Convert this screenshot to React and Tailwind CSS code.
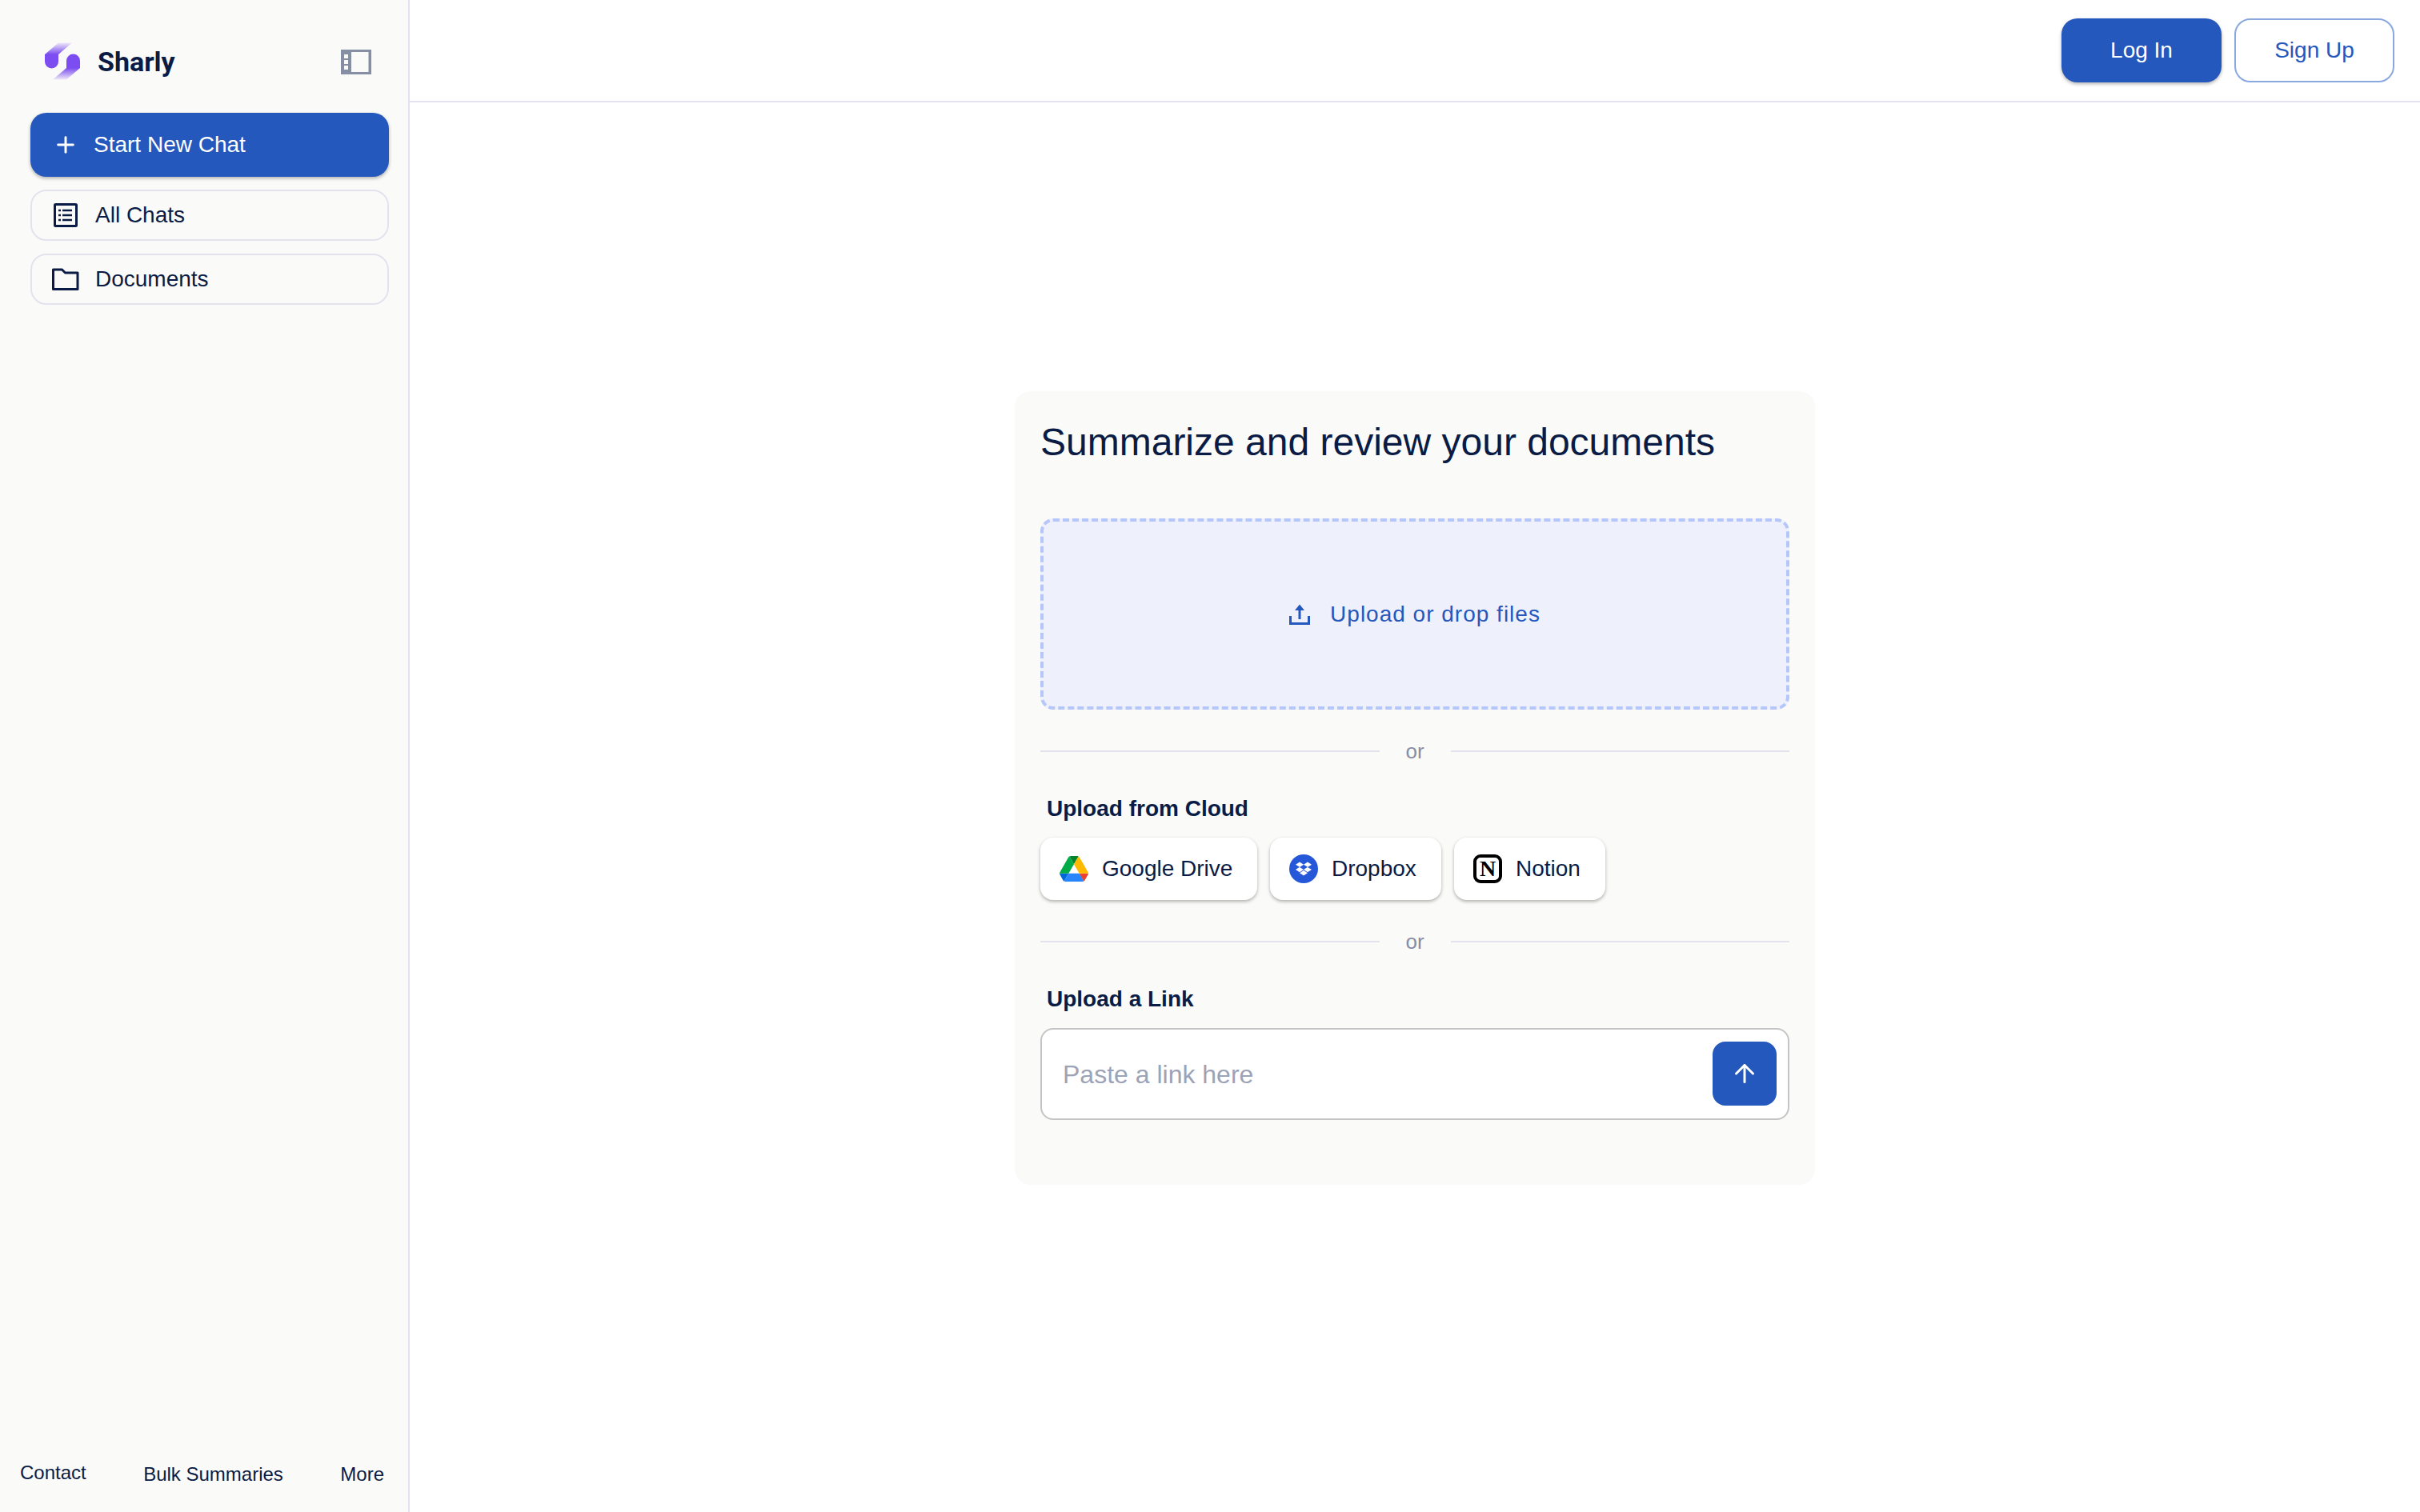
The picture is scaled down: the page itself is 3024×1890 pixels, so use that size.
import { ArrowUp, Plus } from "lucide-react";
import { FaDropbox } from "react-icons/fa";

function Logo() {
  return (
    <svg width="46" height="48" viewBox="0 0 46 48" className="shrink-0">
      <defs>
        <linearGradient id="top" x1="0" y1="1" x2="0" y2="0">
          <stop offset="0" stopColor="#7c4df0" />
          <stop offset="1" stopColor="#7c4df0" stopOpacity="0.1" />
        </linearGradient>
        <linearGradient id="bottom" x1="0" y1="0" x2="0" y2="1">
          <stop offset="0" stopColor="#7c4df0" />
          <stop offset="1" stopColor="#7c4df0" stopOpacity="0.1" />
        </linearGradient>
      </defs>
      <path d="M0 15h17l17-14.500h-17z" fill="url(#top)" />
      <path d="M0 15h17v9a8.500 8.500 0 0 1-17 0z" fill="#7c4df0" />
      <path d="M27 32h17v-9a8.500 8.500 0 0 0-17 0z" fill="#7c4df0" />
      <path d="M27 32h17l-17 14.500h-17z" fill="url(#bottom)" />
    </svg>
  );
}

function PanelIcon() {
  return (
    <svg width="38" height="31" viewBox="0 0 38 31" className="text-[#868ea3]">
      <path fill="currentColor" fillRule="evenodd" d="M0 0h38v31H0zM3 3v25h31.500V3H13v25H3z" />
      <rect x="4" y="6" width="5" height="5" fill="#fafaf8" />
      <rect x="4" y="13" width="5" height="5" fill="#fafaf8" />
      <rect x="4" y="20" width="5" height="5" fill="#fafaf8" />
    </svg>
  );
}

function ListIcon() {
  return (
    <svg width="30" height="30" viewBox="0 0 30 30" fill="none" stroke="#0a1c45">
      <rect x="1.500" y="1.500" width="27" height="27" rx="1" strokeWidth="3" />
      <path d="M11 9h12M11 15h12M11 21h12" strokeWidth="2.500" />
      <path d="M6 9h3M6 15h3M6 21h3" strokeWidth="2.500" />
    </svg>
  );
}

function FolderIcon() {
  return (
    <svg width="34" height="28" viewBox="0 0 34 28" fill="none" stroke="#0a1c45" strokeWidth="3" strokeLinejoin="round">
      <path d="M1.500 2h11l4 4h15.500v20.500h-30.500z" />
    </svg>
  );
}

function UploadIcon() {
  return (
    <svg width="26" height="26" viewBox="0 0 26 26" fill="none" stroke="#2558bd" strokeWidth="3">
      <path d="M13 19V3" />
      <path d="M13 0.500l6 7.500h-12z" fill="#2558bd" stroke="none" />
      <path d="M1.500 15v9.500h23v-9.500" />
    </svg>
  );
}

function DriveIcon() {
  return (
    <svg width="36" height="32" viewBox="0 0 87.300 78">
      <path d="m6.600 66.850 3.850 6.650c.8 1.400 1.950 2.500 3.300 3.300l13.750-23.800h-27.500c0 1.550.4 3.100 1.200 4.500z" fill="#0066da" />
      <path d="m43.650 25-13.750-23.800c-1.350.8-2.500 1.900-3.300 3.300l-25.400 44a9.060 9.060 0 0 0 -1.200 4.500h27.500z" fill="#00ac47" />
      <path d="m73.550 76.800c1.350-.8 2.500-1.900 3.300-3.300l1.600-2.750 7.650-13.250c.8-1.400 1.200-2.950 1.200-4.500h-27.502l5.852 11.500z" fill="#ea4335" />
      <path d="m43.650 25 13.750-23.800c-1.350-.8-2.900-1.200-4.500-1.200h-18.500c-1.600 0-3.150.45-4.500 1.200z" fill="#00832d" />
      <path d="m59.800 53h-32.300l-13.750 23.800c1.350.8 2.900 1.200 4.500 1.200h50.800c1.600 0 3.150-.45 4.500-1.200z" fill="#2684fc" />
      <path d="m73.400 26.500-12.700-22c-.8-1.400-1.950-2.500-3.300-3.300l-13.750 23.800 16.150 28h27.450c0-1.550-.4-3.100-1.200-4.500z" fill="#ffba00" />
    </svg>
  );
}

function Divider() {
  return (
    <div className="flex items-center h-[34px]">
      <div className="flex-1 h-[2px] bg-[#e3e2ee]" />
      <span className="w-[89px] text-center text-[26px] leading-[34px] text-[#868ea3]">or</span>
      <div className="flex-1 h-[2px] bg-[#e3e2ee]" />
    </div>
  );
}

function CloudButton({ icon, label, className }) {
  return (
    <button className={"flex items-center gap-[17px] h-[78px] pl-[24px] bg-white rounded-[16px] shadow-[0_2px_4px_rgba(0,0,0,0.3)] text-[28px] text-[#0a1c45] " + className}>
      {icon}
      {label}
    </button>
  );
}

export default function App() {
  return (
    <div className="flex h-[1890px] bg-white text-[#0a1c45] font-['Liberation_Sans',sans-serif]">
      {/* Sidebar */}
      <aside className="flex flex-col w-[512px] shrink-0 bg-[#fafaf8] border-r-2 border-[#e3e2ee]">
        <div className="flex items-center justify-between h-[141px] pl-[56px] pr-[46px] pt-[13px]">
          <div className="flex items-center gap-[20px]">
            <Logo />
            <span className="font-['Roboto',sans-serif] font-bold text-[34px]">Sharly</span>
          </div>
          <PanelIcon />
        </div>
        <div className="flex flex-col gap-[16px] pl-[38px] pr-[24px]">
          <button className="flex items-center h-[80px] pl-[32px] gap-[23px] rounded-[20px] bg-[#2558bd] text-white text-[28px] shadow-[0_2px_4px_rgba(0,0,0,0.3)]">
            <Plus size={32} strokeWidth={2.200} className="-mx-[4px]" />
            Start New Chat
          </button>
          <button className="flex items-center h-[64px] pl-[27px] gap-[22px] rounded-[20px] border-2 border-[#e3e2ee] text-[28px]">
            <ListIcon />
            All Chats
          </button>
          <button className="flex items-center h-[64px] pl-[25px] gap-[20px] rounded-[20px] border-2 border-[#e3e2ee] text-[28px]">
            <FolderIcon />
            Documents
          </button>
        </div>
        <div className="mt-auto flex justify-between items-center pl-[25px] pr-[30px] pb-[30px] text-[24px] leading-[32px]">
          <a className="mb-[3px]">Contact</a>
          <a>Bulk Summaries</a>
          <a>More</a>
        </div>
      </aside>

      <div className="flex flex-col flex-1">
        {/* Top bar */}
        <header className="flex items-center justify-end gap-[16px] h-[128px] pr-[32px] border-b-2 border-[#e3e2ee]">
          <button className="w-[200px] h-[80px] rounded-[20px] bg-[#2558bd] text-white text-[28px] shadow-[0_2px_4px_rgba(0,0,0,0.3)]">Log In</button>
          <button className="w-[200px] h-[80px] rounded-[20px] border-2 border-[#8aa8e0] text-[#2558bd] text-[28px]">Sign Up</button>
        </header>

        <main className="flex justify-center pt-[361px]">
          <section className="w-[1000px] h-[992px] px-[32px] pt-[32px] rounded-[20px] bg-[#fafaf8]">
            <h1 className="text-[48px] leading-[64px] font-normal mb-[63px]">Summarize and review your documents</h1>
            <div className="flex items-center justify-center gap-[25px] h-[239px] rounded-[16px] border-4 border-dashed border-[#b5c6fb] bg-[#eef0fc] text-[#2558bd] text-[28px] tracking-[1px]">
              <UploadIcon />
              Upload or drop files
            </div>
            <div className="mt-[35px]">
              <Divider />
            </div>
            <h2 className="mt-[39px] pl-[8px] text-[28px] leading-[32px] font-bold">Upload from Cloud</h2>
            <div className="flex gap-[16px] mt-[20px]">
              <CloudButton className="w-[271px]" icon={<DriveIcon />} label="Google Drive" />
              <CloudButton
                className="w-[214px]"
                icon={
                  <span className="flex items-center justify-center w-[36px] h-[36px] rounded-full bg-[#2558d8] text-white">
                    <FaDropbox size={20} />
                  </span>
                }
                label="Dropbox"
              />
              <CloudButton
                className="w-[189px]"
                icon={
                  <span className="flex items-center justify-center w-[36px] h-[36px] rounded-[9px] border-4 border-black bg-white text-black font-['Liberation_Serif',serif] font-bold text-[28px] leading-none">
                    N
                  </span>
                }
                label="Notion"
              />
            </div>
            <div className="mt-[35px]">
              <Divider />
            </div>
            <h2 className="mt-[39px] pl-[8px] text-[28px] leading-[32px] font-bold">Upload a Link</h2>
            <div className="flex items-center justify-between mt-[20px] h-[115px] pl-[26px] pr-[14px] rounded-[16px] border-2 border-[#c4c4c4] bg-white">
              <input
                type="text"
                placeholder="Paste a link here"
                className="flex-1 bg-transparent outline-none text-[32px] placeholder:text-[#9ca3b6]"
              />
              <button className="flex items-center justify-center w-[80px] h-[80px] mb-[2px] rounded-[16px] bg-[#2558bd] text-white">
                <ArrowUp size={36} strokeWidth={2} />
              </button>
            </div>
          </section>
        </main>
      </div>
    </div>
  );
}
